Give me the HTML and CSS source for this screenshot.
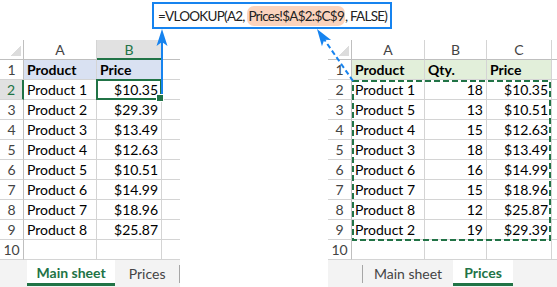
FILE: index.html
```html
<!DOCTYPE html>
<html>
<head>
<meta charset="utf-8">
<link rel="stylesheet" href="styles.css">
</head>
<body>
<div class="page">
  <div class="formula-row">
    <div class="formula"><span class="ftext">=VLOOKUP(A2, <span class="ref">Prices!$A$2:$C$9</span>, FALSE)</span></div>
  </div>
  <div class="sheets">
    <div class="sheet sheet-main">
      <div class="grid grid-main">
        <div class="c corner"></div><div class="c ch">A</div><div class="c ch selcol">B</div><div class="c ch last"></div>
        <div class="c rh">1</div><div class="c b blue">Product</div><div class="c b blue">Price</div><div class="c last"></div>
        <div class="c rh selrow">2</div><div class="c">Product 1</div><div class="c num cursor">$10.35</div><div class="c last"></div>
        <div class="c rh">3</div><div class="c">Product 2</div><div class="c num">$29.39</div><div class="c last"></div>
        <div class="c rh">4</div><div class="c">Product 3</div><div class="c num">$13.49</div><div class="c last"></div>
        <div class="c rh">5</div><div class="c">Product 4</div><div class="c num">$12.63</div><div class="c last"></div>
        <div class="c rh">6</div><div class="c">Product 5</div><div class="c num">$10.51</div><div class="c last"></div>
        <div class="c rh">7</div><div class="c">Product 6</div><div class="c num">$14.99</div><div class="c last"></div>
        <div class="c rh">8</div><div class="c">Product 7</div><div class="c num">$18.96</div><div class="c last"></div>
        <div class="c rh">9</div><div class="c">Product 8</div><div class="c num">$25.87</div><div class="c last"></div>
        <div class="c rh">10</div><div class="c"></div><div class="c"></div><div class="c last"></div>
      </div>
      <div class="tabs tabs-main">
        <div class="tab current tab-w91">Main sheet</div>
        <div class="tab tab-w66">Prices</div>
        <div class="sep"></div>
      </div>
    </div>
    <div class="sheet sheet-prices">
      <div class="grid grid-prices">
        <div class="c corner"></div><div class="c ch">A</div><div class="c ch">B</div><div class="c ch">C</div><div class="c ch last"></div>
        <div class="c rh">1</div><div class="c b green">Product</div><div class="c b green">Qty.</div><div class="c b green">Price</div><div class="c last"></div>
        <div class="c rh">2</div><div class="c">Product 1</div><div class="c num">18</div><div class="c num">$10.35</div><div class="c last"></div>
        <div class="c rh">3</div><div class="c">Product 5</div><div class="c num">13</div><div class="c num">$10.51</div><div class="c last"></div>
        <div class="c rh">4</div><div class="c">Product 4</div><div class="c num">15</div><div class="c num">$12.63</div><div class="c last"></div>
        <div class="c rh">5</div><div class="c">Product 3</div><div class="c num">18</div><div class="c num">$13.49</div><div class="c last"></div>
        <div class="c rh">6</div><div class="c">Product 6</div><div class="c num">16</div><div class="c num">$14.99</div><div class="c last"></div>
        <div class="c rh">7</div><div class="c">Product 7</div><div class="c num">15</div><div class="c num">$18.96</div><div class="c last"></div>
        <div class="c rh">8</div><div class="c">Product 8</div><div class="c num">12</div><div class="c num">$25.87</div><div class="c last"></div>
        <div class="c rh">9</div><div class="c">Product 2</div><div class="c num">19</div><div class="c num">$29.39</div><div class="c last"></div>
        <div class="c rh">10</div><div class="c"></div><div class="c"></div><div class="c"></div><div class="c last"></div>
        <svg class="ants" width="199" height="161" viewBox="0 0 199 161"><rect x="1" y="1" width="197" height="159" fill="none" stroke="#217346" stroke-width="2" stroke-dasharray="6 3"/></svg>
      </div>
      <div class="tabs tabs-prices">
        <div class="sep"></div>
        <div class="tab tab-w90">Main sheet</div>
        <div class="tab current tab-w60">Prices</div>
      </div>
    </div>
  </div>
  <svg class="arrows" width="557" height="287" viewBox="0 0 557 287">
    <line x1="162" y1="100" x2="162" y2="42" stroke="#1683ef" stroke-width="2"/>
    <path d="M162 29 L167.5 46 L162 42 L156.5 46 Z" fill="#1683ef"/>
    <line x1="353" y1="81" x2="322.5" y2="37" stroke="#1683ef" stroke-width="2" stroke-dasharray="5 3"/>
    <g transform="rotate(-34 317 29)">
      <path d="M317 29 L322.5 46 L317 42 L311.5 46 Z" fill="#1683ef"/>
    </g>
  </svg>
</div>
</body>
</html>
```
FILE: styles.css
```css
* { box-sizing: border-box; }
body { margin: 0; background: #fff; font-family: Lato, "Liberation Sans", sans-serif; }
.page { position: relative; width: 557px; height: 287px; overflow: hidden; }

.formula-row { height: 40px; padding: 2px 0 0 152px; }
.formula {
  width: 240px; height: 27px; border: 2px solid #1683ef; background: #fff;
  display: flex; align-items: center; padding-left: 4px;
}
.ftext { font-size: 13.5px; letter-spacing: -0.75px; color: #222; white-space: pre; }
.ref { background: #fbd3bd; border-radius: 7px; padding: 2px 1px; }

.sheets { display: flex; gap: 148px; }
.sheet-main { width: 180px; }
.sheet-prices { width: 229px; }

.grid { display: grid; grid-auto-rows: 20px; position: relative; }
.grid-main { grid-template-columns: 24px 73px 65px 18px; }
.grid-prices { grid-template-columns: 24px 73px 62px 65px 5px; }

.c {
  border-right: 1px solid #d4d4d4; border-bottom: 1px solid #d4d4d4;
  padding: 0 3px; font-size: 14px; line-height: 19px; color: #000;
  white-space: nowrap; overflow: hidden;
}
.c.last { border-right: none; }
.num { text-align: right; }
.b { font-weight: 700; }
.blue { background: #d9e1f2; }
.green { background: #e2efda; }

.ch { text-align: center; color: #444; border-bottom-color: #bfbfbf; }
.rh { text-align: center; color: #444; padding: 0; border-right-color: #bfbfbf; }
.corner {
  border-bottom-color: #bfbfbf; border-right-color: #bfbfbf;
  background: linear-gradient(to top left, #dcdcdc 50%, transparent 50%) no-repeat right 2px bottom 3px / 11px 10px;
}
.selcol { background: #e1e1e1; color: #217346; border-bottom: 2px solid #217346; }
.selrow { background: #e1e1e1; color: #217346; border-right: 2px solid #217346; }

.cursor { position: relative; overflow: visible; }
.cursor::after {
  content: ""; position: absolute; left: -1px; top: -1px; right: -1px; bottom: -1px;
  border: 2px solid #217346;
}
.cursor::before {
  content: ""; position: absolute; right: -3px; bottom: -3px; width: 6px; height: 6px;
  background: #217346; border: 1px solid #fff; z-index: 1;
}

.ants { position: absolute; left: 24px; top: 40px; }

.tabs { height: 27px; background: #f3f3f3; display: flex; align-items: flex-start; }
.tabs-main { padding-left: 27px; }
.tabs-prices { padding-left: 34px; }
.tab {
  height: 26px; display: flex; align-items: center; justify-content: center;
  font-size: 14px; color: #444;
}
.tab.current { background: #fff; color: #217346; font-weight: 700; border-bottom: 3px solid #217346; padding-top: 2px; }
.tab-w91 { width: 91px; }
.tab-w66 { width: 66px; }
.tab-w90 { width: 90px; }
.tab-w60 { width: 60px; }
.sep { width: 1px; height: 18px; margin-top: 5px; background: #a6a6a6; }

.arrows { position: absolute; left: 0; top: 0; pointer-events: none; }
```
